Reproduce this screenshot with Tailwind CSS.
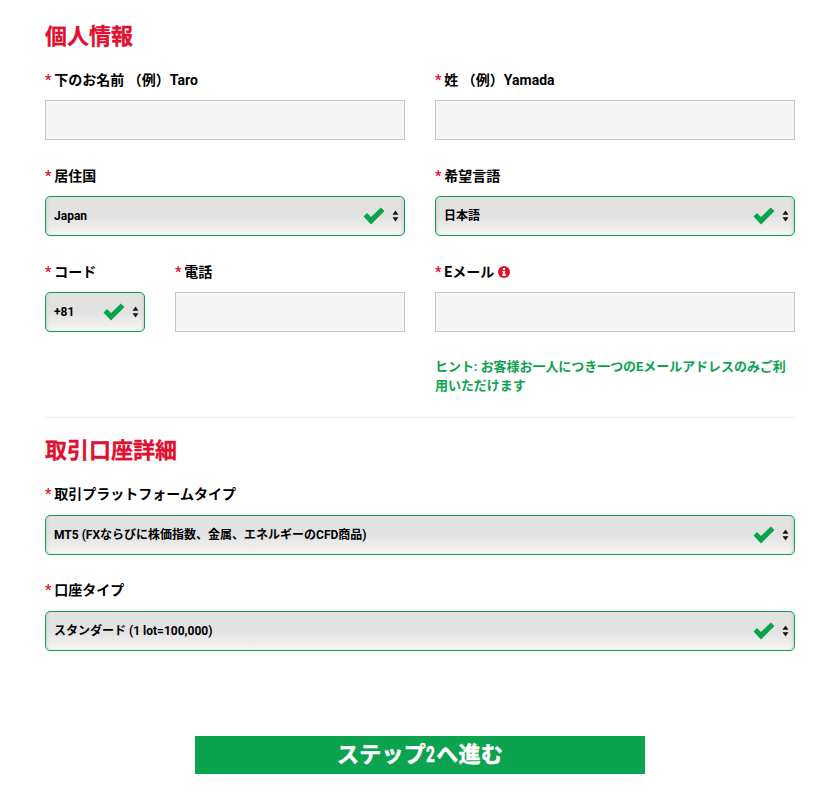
<!DOCTYPE html>
<html lang="ja">
<head>
    <meta charset="UTF-8">
    <meta name="viewport" content="width=device-width, initial-scale=1.0">
    <title>個人情報</title>
    <script src="https://cdn.jsdelivr.net/npm/@tailwindcss/browser@4"></script>
</head>
<body class="bg-white font-['Roboto','Noto_Sans_CJK_JP',sans-serif] text-[14px] font-bold text-black">
<svg class="hidden">
    <symbol id="check" viewBox="0 0 22 18"><path d="M0.5 9.5 L4 6 L8 10 L17.8 0.5 L21.5 4 L8 17.5 Z" fill="#0ca34f"/></symbol>
    <symbol id="arrows" viewBox="0 0 7 12"><path d="M3.5 0.5 L6.5 4.8 H0.5 Z M0.5 7.2 H6.5 L3.5 11.5 Z" fill="#111"/></symbol>
</svg>
<div class="w-[840px] h-[800px] px-[45px] pt-[23px]">
    <h2 class="text-[22px] leading-[28px] text-[#e0102f] mb-[19px] [-webkit-text-stroke:0.3px_#e0102f]">個人情報</h2>

    <div class="grid grid-cols-2 gap-x-[30px] gap-y-[26px]">
        <div>
            <label class="block h-[20px] leading-[20px] mb-[10px]"><span class="text-[#e0102f] mr-[3px]">*</span>下のお名前 （例）Taro</label>
            <div class="h-[40px] bg-[#f5f5f5] border border-[#c8c8c8]"></div>
        </div>
        <div>
            <label class="block h-[20px] leading-[20px] mb-[10px]"><span class="text-[#e0102f] mr-[3px]">*</span>姓 （例）Yamada</label>
            <div class="h-[40px] bg-[#f5f5f5] border border-[#c8c8c8]"></div>
        </div>

        <div>
            <label class="block h-[20px] leading-[20px] mb-[10px]"><span class="text-[#e0102f] mr-[3px]">*</span>居住国</label>
            <div class="h-[40px] flex items-center pl-[8px] pr-[5px] rounded-[5px] border border-[#0ca34f] bg-gradient-to-b from-[#e2e2e2] from-50% to-[#f6f6f6] shadow-[inset_3px_0_3px_-2px_#ccc,inset_-3px_0_3px_-2px_#ccc] text-[12px]">
                <span class="flex-1">Japan</span>
                <svg class="w-[22px] h-[18px] mr-[7px]"><use href="#check"/></svg>
                <svg class="w-[7px] h-[12px]"><use href="#arrows"/></svg>
            </div>
        </div>
        <div>
            <label class="block h-[20px] leading-[20px] mb-[10px]"><span class="text-[#e0102f] mr-[3px]">*</span>希望言語</label>
            <div class="h-[40px] flex items-center pl-[8px] pr-[5px] rounded-[5px] border border-[#0ca34f] bg-gradient-to-b from-[#e2e2e2] from-50% to-[#f6f6f6] shadow-[inset_3px_0_3px_-2px_#ccc,inset_-3px_0_3px_-2px_#ccc] text-[12px]">
                <span class="flex-1">日本語</span>
                <svg class="w-[22px] h-[18px] mr-[7px]"><use href="#check"/></svg>
                <svg class="w-[7px] h-[12px]"><use href="#arrows"/></svg>
            </div>
        </div>

        <div class="flex gap-x-[30px]">
            <div class="w-[100px]">
                <label class="block h-[20px] leading-[20px] mb-[10px]"><span class="text-[#e0102f] mr-[3px]">*</span>コード</label>
                <div class="h-[40px] flex items-center pl-[8px] pr-[5px] rounded-[5px] border border-[#0ca34f] bg-gradient-to-b from-[#e2e2e2] from-50% to-[#f6f6f6] shadow-[inset_3px_0_3px_-2px_#ccc,inset_-3px_0_3px_-2px_#ccc] text-[12px]">
                    <span class="flex-1">+81</span>
                    <svg class="w-[22px] h-[18px] mr-[7px]"><use href="#check"/></svg>
                    <svg class="w-[7px] h-[12px]"><use href="#arrows"/></svg>
                </div>
            </div>
            <div class="flex-1">
                <label class="block h-[20px] leading-[20px] mb-[10px]"><span class="text-[#e0102f] mr-[3px]">*</span>電話</label>
                <div class="h-[40px] bg-[#f5f5f5] border border-[#c8c8c8]"></div>
            </div>
        </div>
        <div>
            <label class="flex items-center h-[20px] leading-[20px] mb-[10px]"><span class="text-[#e0102f] mr-[3px]">*</span>Eメール
                <svg class="w-[12px] h-[12px] ml-[4px]" viewBox="0 0 12 12"><circle cx="6" cy="6" r="6" fill="#e0102f"/><rect x="4.9" y="2" width="2.2" height="2" fill="#fff"/><path d="M4.2 5 H7.1 V8.6 H8 V10 H4.2 V8.6 H5 V6.3 H4.2 Z" fill="#fff"/></svg>
            </label>
            <div class="h-[40px] bg-[#f5f5f5] border border-[#c8c8c8]"></div>
            <p class="mt-[25px] text-[13px] text-[#0ca34f] leading-[19px] tracking-[-0.05px]">ヒント: お客様お一人につき一つのEメールアドレスのみご利用いただけます</p>
        </div>
    </div>

    <hr class="mt-[22px] border-[#eeeeee]">

    <h2 class="mt-[19px] text-[22px] leading-[28px] text-[#e0102f] mb-[19px] [-webkit-text-stroke:0.3px_#e0102f]">取引口座詳細</h2>

    <label class="block h-[20px] leading-[20px] mb-[11px]"><span class="text-[#e0102f] mr-[3px]">*</span>取引プラットフォームタイプ</label>
    <div class="h-[40px] flex items-center pl-[8px] pr-[5px] rounded-[5px] border border-[#0ca34f] bg-gradient-to-b from-[#e2e2e2] from-50% to-[#f6f6f6] shadow-[inset_3px_0_3px_-2px_#ccc,inset_-3px_0_3px_-2px_#ccc] text-[12px]">
        <span class="flex-1">MT5 (FXならびに株価指数、金属、エネルギーのCFD商品)</span>
        <svg class="w-[22px] h-[18px] mr-[7px]"><use href="#check"/></svg>
        <svg class="w-[7px] h-[12px]"><use href="#arrows"/></svg>
    </div>

    <label class="block h-[20px] leading-[20px] mt-[25px] mb-[11px]"><span class="text-[#e0102f] mr-[3px]">*</span>口座タイプ</label>
    <div class="h-[40px] flex items-center pl-[8px] pr-[5px] rounded-[5px] border border-[#0ca34f] bg-gradient-to-b from-[#e2e2e2] from-50% to-[#f6f6f6] shadow-[inset_3px_0_3px_-2px_#ccc,inset_-3px_0_3px_-2px_#ccc] text-[12px]">
        <span class="flex-1">スタンダード (1 lot=100,000)</span>
        <svg class="w-[22px] h-[18px] mr-[7px]"><use href="#check"/></svg>
        <svg class="w-[7px] h-[12px]"><use href="#arrows"/></svg>
    </div>

    <div class="mt-[85px] flex justify-center">
        <button class="w-[450px] h-[38px] bg-[#0ca34f] text-white text-[22px] leading-[38px] font-bold tracking-[0.3px] [-webkit-text-stroke:0.5px_#fff]">ステップ<span class="inline-block w-[10px] scale-x-[.7] origin-left">2</span>へ進む</button>
    </div>
</div>
</body>
</html>
